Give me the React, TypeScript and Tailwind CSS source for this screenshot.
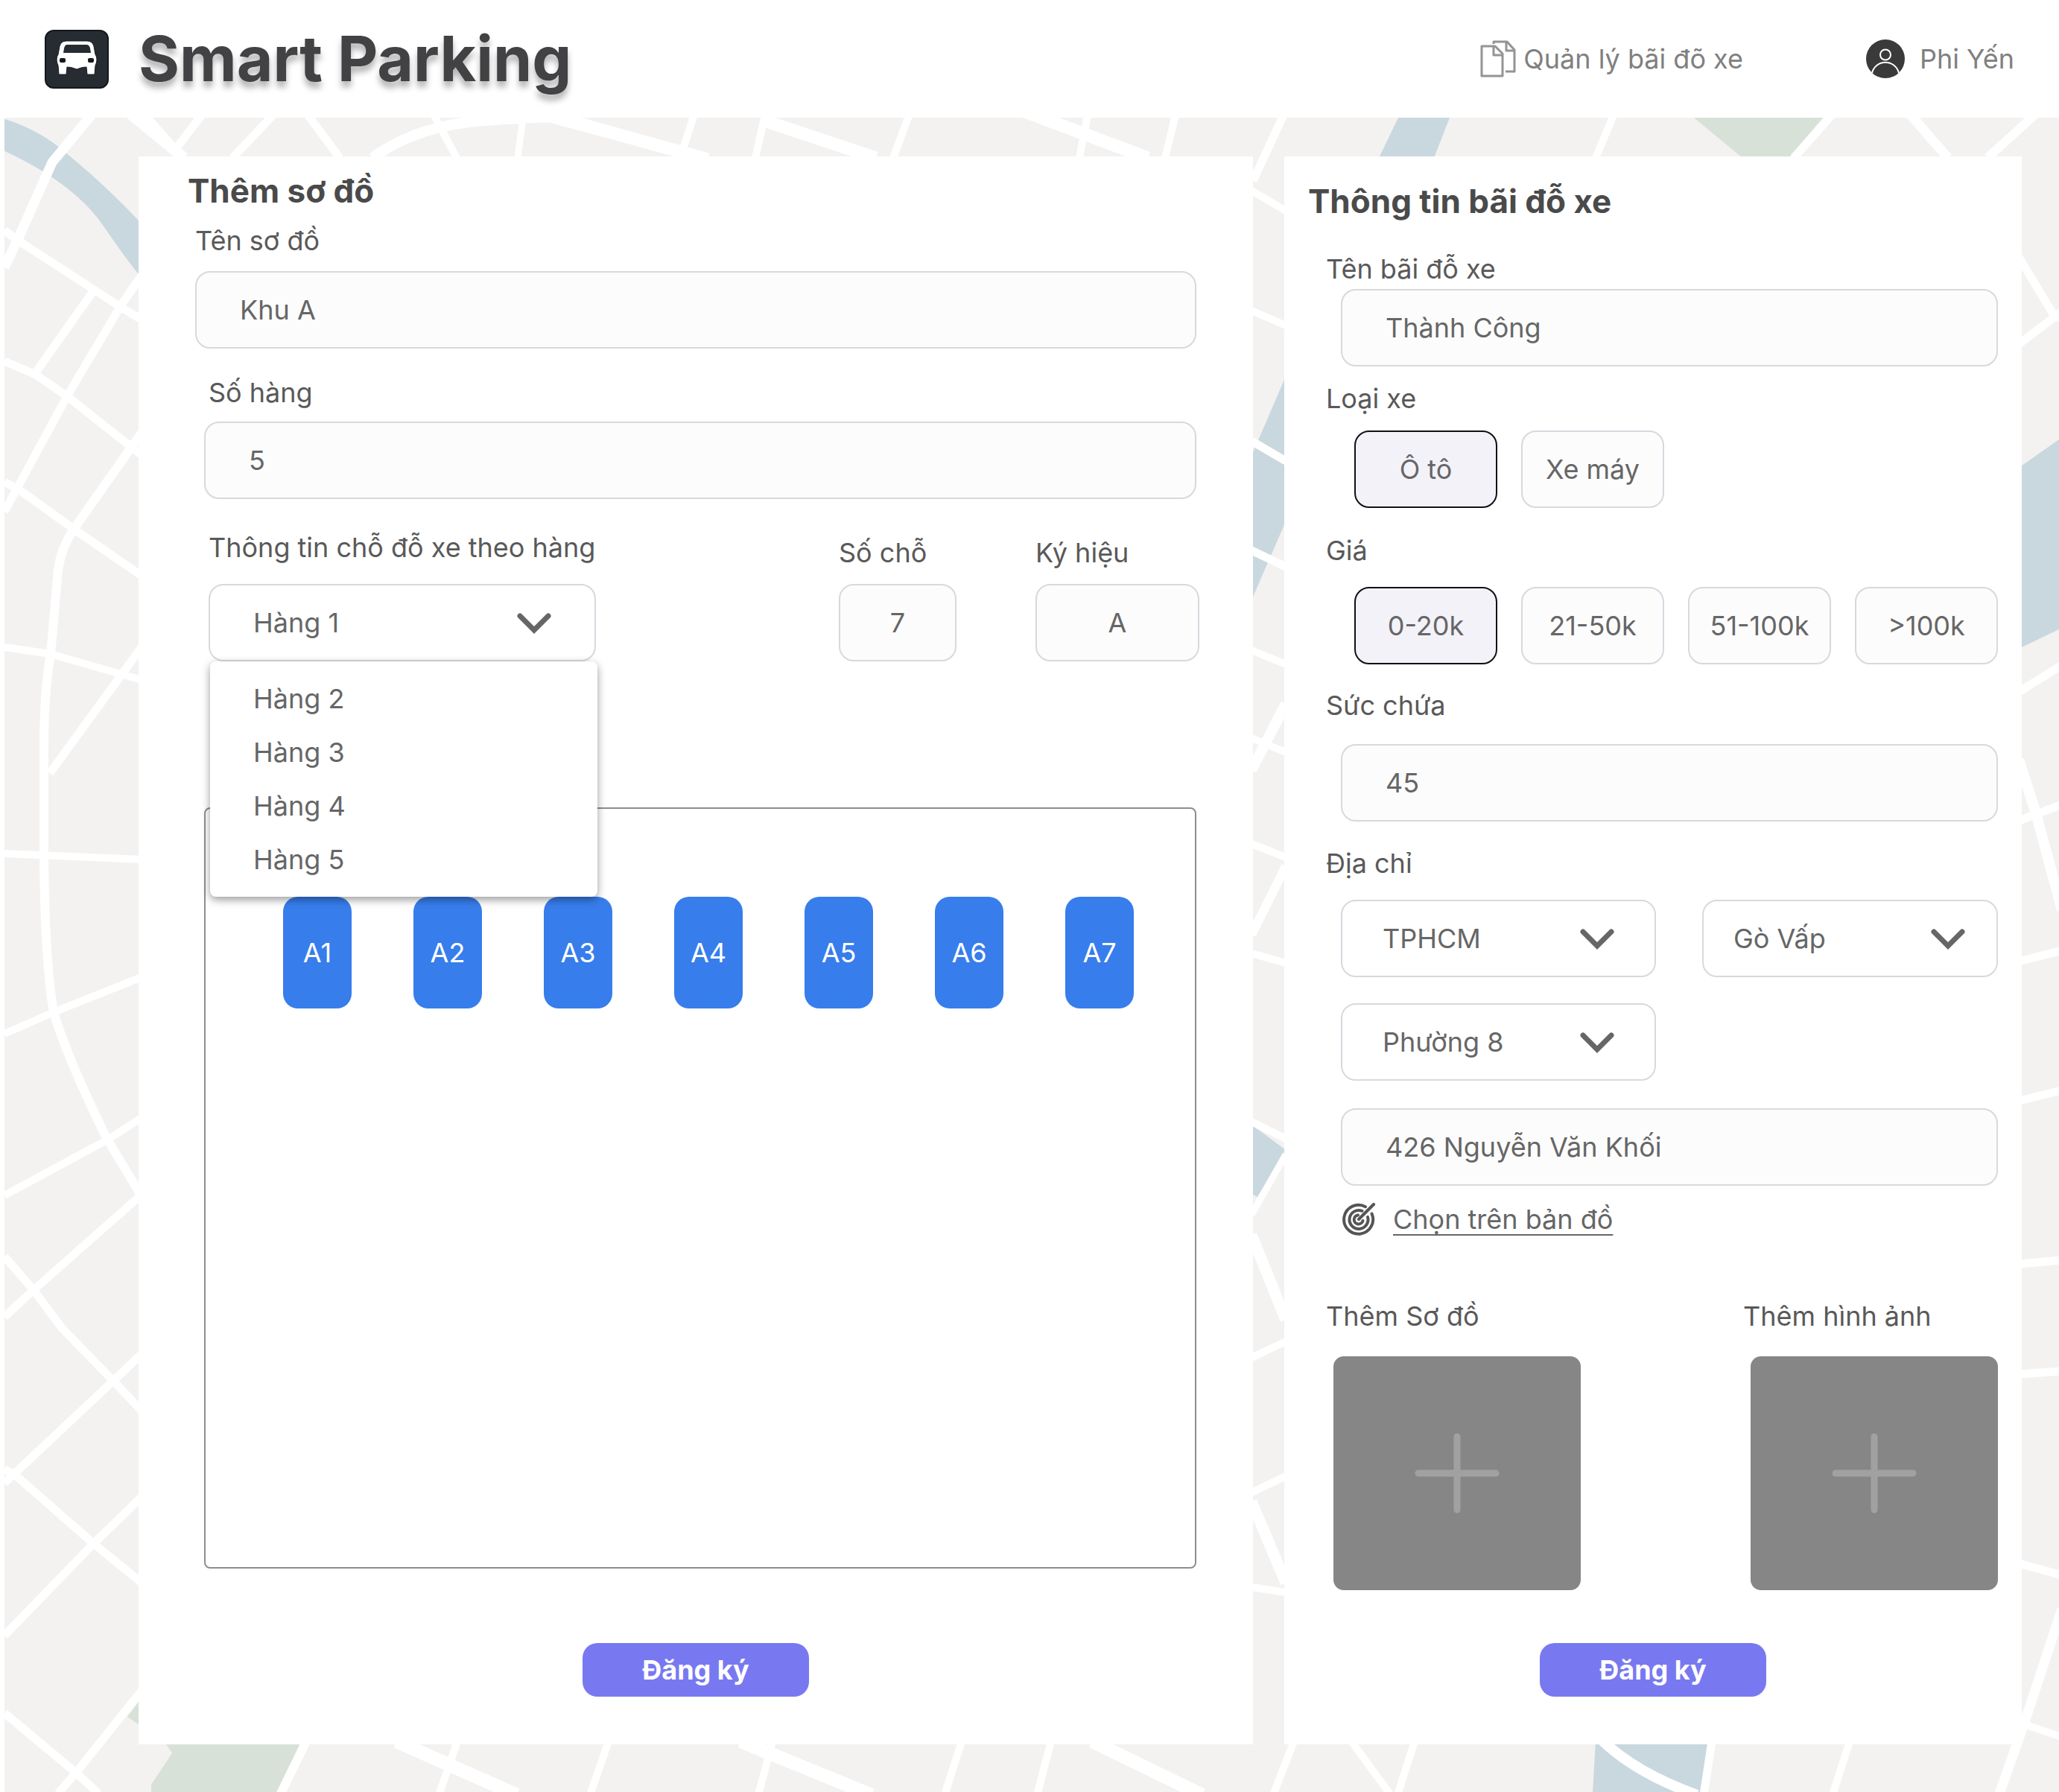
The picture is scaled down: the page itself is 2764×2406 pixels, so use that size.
import { useId, useState } from "react";
import type { ReactNode } from "react";

type Road = [path: string, width: number];

const roads: Road[] = [
  // left margin
  ["M6 359 L25 319 L70 218 L124 153", 13],
  ["M6 309 L23 322 L163 413 L190 429", 11],
  ["M48 500 L125 391", 11],
  ["M6 687 L90 532 L163 409 L190 370", 11],
  ["M6 485 L48 503 L90 532 L190 611", 11],
  ["M6 647 L25 657 L100 711 L190 773", 11],
  ["M190 581 L100 709 Q82 735 78 765 L68 878 Q59 930 59 1000 L59 1145 Q60 1290 72 1359 Q90 1420 143 1528 L190 1606", 12],
  ["M6 869 L68 878 L190 913", 10],
  ["M67 1038 L190 869", 11],
  ["M6 1146 L190 1154", 10],
  ["M6 1388 L72 1359 L190 1312", 10],
  ["M6 1605 L143 1531 L190 1501", 10],
  ["M6 1768 L45 1732 L190 1604", 11],
  ["M6 1687 L45 1732 L83 1783 L152 1854 L190 1894", 11],
  ["M6 1991 L152 1854 L190 1818", 11],
  ["M6 1973 L20 1980 L125 2072 L190 2125", 11],
  ["M6 2196 L125 2073 L190 2010", 11],
  ["M6 2300 L103 2381 L132 2408", 11],
  ["M190 2270 L103 2379 L78 2408", 11],
  // top margin
  ["M172 150 L247 212", 15],
  ["M192 150 L240 204", 9],
  ["M274 150 L239 196", 11],
  ["M371 150 L312 212", 11],
  ["M410 150 L456 212", 11],
  ["M500 212 Q560 168 650 162 T740 158 L950 214", 14],
  ["M580 150 L613 212", 10],
  ["M703 150 L695 212", 9],
  ["M720 150 L950 214", 17],
  ["M933 150 L913 212", 10],
  ["M1028 150 L1014 212", 10],
  ["M1026 162 L1176 212", 17],
  ["M1222 150 L1199 212", 10],
  ["M1376 150 L1541 212", 17],
  ["M1461 150 L1449 212", 10],
  ["M1579 150 L1564 212", 10],
  ["M1725 150 L1682 243", 11],
  ["M2168 150 L2142 212", 10],
  ["M2463 150 L2408 212", 11],
  ["M2561 150 L2615 212", 13],
  ["M2736 150 L2668 212", 12],
  // gap between the cards
  ["M1680 256 L1726 283", 10],
  ["M1680 417 L1726 437", 10],
  ["M1680 592 L1726 619", 11],
  ["M1680 739 L1726 761", 11],
  ["M1680 873 L1726 892", 10],
  ["M1680 1034 L1726 945", 14],
  ["M1680 991 L1726 1010", 10],
  ["M1680 1133 L1726 1151", 10],
  ["M1680 1255 L1726 1163", 12],
  ["M1680 1280 L1726 1293", 10],
  ["M1680 1506 L1726 1529", 10],
  ["M1680 1631 L1726 1550", 9],
  ["M1680 1658 L1726 1772", 15],
  ["M1680 1823 L1726 1801", 10],
  ["M1680 2004 L1726 1982", 10],
  ["M1680 2016 L1726 2125", 15],
  ["M1680 2131 L1726 2138", 10],
  // right margin
  ["M2710 345 L2757 423 L2768 428", 11],
  ["M2710 462 L2768 418", 11],
  ["M2710 929 L2768 893", 11],
  ["M2710 1020 L2733 1092 L2768 1222", 14],
  ["M2710 1102 L2768 1080", 11],
  ["M2710 1291 L2768 1276", 11],
  ["M2710 1478 L2768 1464", 11],
  ["M2710 1697 L2768 1692", 11],
  ["M2710 1845 L2768 1841", 11],
  ["M2710 2099 L2768 2115", 11],
  ["M2768 2160 L2717 2315 L2684 2408", 13],
  ["M2717 2315 L2768 2332", 10],
  // bottom margin
  ["M411 2338 L376 2410", 12],
  ["M532 2338 L694 2410", 18],
  ["M614 2338 L589 2410", 10],
  ["M817 2338 L792 2410", 10],
  ["M994 2338 L1170 2410", 18],
  ["M1037 2338 L1018 2410", 10],
  ["M1291 2338 L1268 2410", 10],
  ["M1411 2338 L1392 2410", 10],
  ["M1466 2338 L1614 2410", 18],
  ["M1737 2338 L1709 2410", 10],
  ["M1814 2338 L1867 2410", 10],
  ["M1899 2338 L1876 2410", 10],
  ["M2150 2336 Q2195 2380 2278 2410", 14],
  ["M2298 2338 L2287 2410", 11],
  ["M2483 2338 L2460 2410", 10],
];

const waters = [
  "M0 158 Q50 172 87 204 Q143 250 186 296 V368 Q167 345 140 305 Q100 245 0 200 Z",
  "M1877 158 H1946 L1925 212 H1851 Z",
  "M1680 612 L1726 505 V700 L1680 806 Z",
  "M1680 1510 L1726 1544 L1688 1607 L1680 1603 Z",
  "M2710 628 L2764 590 V845 L2710 871 Z",
  "M2142 2338 H2296 L2283 2406 H2138 Z",
];

const parks = [
  "M2274 158 H2447 L2401 212 H2339 Z",
  "M171 2305 L190 2280 V2338 H410 L376 2406 H203 V2396 L231 2354 L222 2340 Z",
];

function MapBackdrop() {
  return (
    <svg
      aria-hidden="true"
      viewBox="6 158 2758 2248"
      preserveAspectRatio="xMinYMin slice"
      className="absolute inset-y-0 right-0 left-1.5 h-full w-[calc(100%-6px)]"
    >
      <rect x="0" y="150" width="2770" height="2260" fill="#f3f2f0" />
      {waters.map((d) => (
        <path key={d} d={d} fill="#c9d8df" />
      ))}
      {parks.map((d) => (
        <path key={d} d={d} fill="#d8e1d8" />
      ))}
      {roads.map(([d, width]) => (
        <path key={d} d={d} fill="none" stroke="#ffffff" strokeWidth={width} strokeLinejoin="round" />
      ))}
    </svg>
  );
}

function LogoIcon() {
  return (
    <svg aria-hidden="true" viewBox="0 0 86 79" className="h-[79px] w-[86px] shrink-0">
      <rect x="1" y="1" width="84" height="77" rx="11" fill="#272c33" stroke="#14181d" strokeWidth="2" />
      <path
        d="M29 15 H57 Q64 15 66 22 L68 33 Q70 36 70 40 Q70 44 68 48 L67 60 H57 L56 50 Q50 50 46 52 Q43 54 40 52 Q36 50 30 50 L29 60 H19 L18 48 Q16 44 16 40 Q16 36 18 33 L20 22 Q22 15 29 15 Z"
        fill="#ffffff"
        stroke="#14181d"
        strokeWidth="1"
      />
      <path d="M30 20 H56 Q60 20 61 25 L62 31 H25 L26 25 Q27 20 30 20 Z" fill="#272c33" />
      <rect x="20" y="38" width="8" height="6" rx="2" fill="#14181d" />
      <rect x="58" y="38" width="8" height="6" rx="2" fill="#14181d" />
    </svg>
  );
}

function DocumentsIcon() {
  return (
    <svg aria-hidden="true" viewBox="0 0 48 50" className="h-[50px] w-12 shrink-0" fill="none" stroke="#949494" strokeWidth="3" strokeLinejoin="round">
      <path d="M2 8 H20 L30 18 V48 H2 Z" />
      <path d="M18 8 V20 H30" />
      <path d="M18 5 V2 H36 L46 13 V42 H34" />
      <path d="M35 2 V14 H46" />
    </svg>
  );
}

function UserIcon() {
  return (
    <svg aria-hidden="true" viewBox="0 0 52 52" className="size-[52px] shrink-0">
      <circle cx="26" cy="26" r="26" fill="#3a3a3a" />
      <circle cx="26" cy="20.500" r="7" fill="none" stroke="#ffffff" strokeWidth="2" />
      <path d="M8 45 A18.500 18.500 0 0 1 44 45" fill="none" stroke="#ffffff" strokeWidth="2" />
    </svg>
  );
}

function TargetIcon() {
  return (
    <svg aria-hidden="true" viewBox="0 0 44 44" className="size-11 shrink-0" fill="none" stroke="#555555" strokeWidth="4" strokeLinecap="round">
      <path d="M31 5.200 A19.500 19.500 0 1 0 39.500 14.500" />
      <path d="M26.500 10.800 A12.500 12.500 0 1 0 34 19" />
      <path d="M21 16.500 A6 6 0 1 0 27.500 24" />
      <path d="M22 22 L42 2" />
    </svg>
  );
}

function Chevron() {
  return (
    <svg aria-hidden="true" viewBox="0 0 46 28" className="h-7 w-[46px]" fill="none" stroke="#666666" strokeWidth="7" strokeLinecap="round">
      <path d="M4 4 L23 23 L42 4" strokeLinejoin="miter" />
    </svg>
  );
}

const fieldBox = "h-[104px] w-full rounded-[20px] border-2 border-[#d8d8df] text-[#666666]";

function Field({
  label,
  value,
  className,
  labelClass,
  inputClass,
}: {
  label: string;
  value: string;
  className: string;
  labelClass: string;
  inputClass: string;
}) {
  const id = useId();
  return (
    <div className={`flex flex-col ${className}`}>
      <label htmlFor={id} className={labelClass}>
        {label}
      </label>
      <input id={id} defaultValue={value} className={`${fieldBox} bg-[#fcfcfc] ${inputClass}`} />
    </div>
  );
}

function Select({
  id,
  label,
  options,
  padding,
  chevronClass,
}: {
  id?: string;
  label?: string;
  options: string[];
  padding: string;
  chevronClass: string;
}) {
  return (
    <div className="relative">
      <select id={id} aria-label={label} className={`${fieldBox} appearance-none bg-white ${padding}`}>
        {options.map((option) => (
          <option key={option}>{option}</option>
        ))}
      </select>
      <span className={`pointer-events-none absolute top-[39px] ${chevronClass}`}>
        <Chevron />
      </span>
    </div>
  );
}

function ChoiceGroup({ label, options, className, listClass }: { label: string; options: string[]; className: string; listClass: string }) {
  const id = useId();
  const [selected, setSelected] = useState(options[0]);
  return (
    <div role="group" aria-labelledby={id} className={className}>
      <p id={id}>{label}</p>
      <div className={`ml-[38px] grid grid-cols-4 gap-8 ${listClass}`}>
        {options.map((option) => (
          <button
            key={option}
            type="button"
            aria-pressed={option === selected}
            onClick={() => setSelected(option)}
            className={
              option === selected
                ? "h-[104px] rounded-[20px] border-2 border-[#111111] bg-[#f3f2f9] text-[#666666]"
                : "h-[104px] rounded-[20px] border-2 border-[#d8d8df] bg-[#fcfcfc] text-[#666666]"
            }
          >
            {option}
          </button>
        ))}
      </div>
    </div>
  );
}

function SubmitButton({ className }: { className: string }) {
  return (
    <button type="submit" className={`h-[72px] w-[304px] rounded-[20px] bg-[#7879f1] font-bold text-white ${className}`}>
      Đăng ký
    </button>
  );
}

function UploadTile({ label }: { label: string }) {
  const id = useId();
  return (
    <div>
      <p id={id}>{label}</p>
      <button
        type="button"
        aria-labelledby={id}
        className="mt-8 ml-2.5 flex h-[314px] w-[332px] items-center justify-center rounded-[14px] bg-[#868686]"
      >
        <svg aria-hidden="true" viewBox="0 0 114 108" className="h-[108px] w-[114px]" stroke="#a1a1a1" strokeWidth="9" strokeLinecap="round">
          <path d="M5 54 H109" />
          <path d="M57 5 V103" />
        </svg>
      </button>
    </div>
  );
}

function CardTitle({ children, className }: { children: ReactNode; className: string }) {
  return <h2 className={`text-[44px] leading-[52px] font-bold text-[#4a4a4a] ${className}`}>{children}</h2>;
}

function DiagramCard() {
  const slots = ["A1", "A2", "A3", "A4", "A5", "A6", "A7"];
  const rows = ["Hàng 2", "Hàng 3", "Hàng 4", "Hàng 5"];
  return (
    <form className="flex flex-col bg-white pt-5 pb-16" onSubmit={(event) => event.preventDefault()}>
      <CardTitle className="ml-[66px]">Thêm sơ đồ</CardTitle>
      <Field label="Tên sơ đồ" value="Khu A" className="mt-[19px] mr-[76px] ml-[76px]" labelClass="mb-[19px]" inputClass="px-[58px]" />
      <Field label="Số hàng" value="5" className="mt-[37px] mr-[76px] ml-[88px]" labelClass="mb-[17px] ml-1.5" inputClass="px-[58px]" />
      <div className="mt-[43px] mr-[72px] ml-[94px] flex items-end">
        <div className="relative w-[520px]">
          <label htmlFor="row" className="mb-[27px] block">
            Thông tin chỗ đỗ xe theo hàng
          </label>
          <Select id="row" options={["Hàng 1", ...rows]} padding="px-[58px]" chevronClass="right-[60px]" />
          <ul
            role="listbox"
            aria-label="Hàng"
            className="absolute top-full left-0.5 z-10 w-[520px] rounded-lg bg-white py-3.5 text-[#666666] shadow-[0_4px_12px_rgba(0,0,0,0.4)]"
          >
            {rows.map((row) => (
              <li key={row} role="option" aria-selected="false" className="px-[58px] leading-[72px]">
                {row}
              </li>
            ))}
          </ul>
        </div>
        <Field label="Số chỗ" value="7" className="ml-auto w-[158px]" labelClass="mb-5" inputClass="text-center" />
        <Field label="Ký hiệu" value="A" className="ml-[106px] w-[220px]" labelClass="mb-5" inputClass="text-center" />
      </div>
      <div className="mt-[196px] mr-[76px] ml-[88px] h-[1022px] rounded-lg border-2 border-[#8e8e8e] pt-[118px] pr-[82px] pl-[104px]">
        <ul className="flex justify-between">
          {slots.map((slot) => (
            <li key={slot} className="flex h-[150px] w-[92px] items-center justify-center rounded-[20px] bg-[#377dec] text-white">
              {slot}
            </li>
          ))}
        </ul>
      </div>
      <SubmitButton className="mx-auto mt-[100px]" />
    </form>
  );
}

function ParkingInfoCard() {
  return (
    <form className="flex flex-col bg-white px-8 pt-[34px] pb-16" onSubmit={(event) => event.preventDefault()}>
      <CardTitle className="">Thông tin bãi đỗ xe</CardTitle>
      <div className="flex flex-col pl-6">
        <Field label="Tên bãi đỗ xe" value="Thành Công" className="mt-[43px] ml-5" labelClass="-ml-5 mb-[5px]" inputClass="px-[58px]" />
        <ChoiceGroup label="Loại xe" options={["Ô tô", "Xe máy"]} className="mt-[21px]" listClass="mt-[21px]" />
        <ChoiceGroup label="Giá" options={["0-20k", "21-50k", "51-100k", ">100k"]} className="mt-[35px]" listClass="mt-[27px]" />
        <Field label="Sức chứa" value="45" className="mt-[33px] ml-5" labelClass="-ml-5 mb-[30px]" inputClass="px-[58px]" />
        <p className="mt-[34px]">Địa chỉ</p>
        <div className="mt-[27px] ml-5 grid grid-cols-[423fr_397fr] gap-x-[62px] gap-y-[35px]">
          <Select label="Tỉnh, thành phố" options={["TPHCM"]} padding="px-[54px]" chevronClass="right-14" />
          <Select label="Quận, huyện" options={["Gò Vấp"]} padding="px-10" chevronClass="right-11" />
          <Select label="Phường, xã" options={["Phường 8"]} padding="px-[54px]" chevronClass="right-14" />
        </div>
        <div className="mt-[37px] ml-5">
          <input aria-label="Số nhà, tên đường" defaultValue="426 Nguyễn Văn Khối" className={`${fieldBox} bg-[#fcfcfc] px-[58px]`} />
        </div>
        <a href="#map" className="mt-[23px] ml-[22px] flex items-center gap-6 self-start text-[#666666]">
          <TargetIcon />
          <span className="underline decoration-2 underline-offset-[7px]">Chọn trên bản đồ</span>
        </a>
        <div className="mt-[86px] flex justify-between">
          <UploadTile label="Thêm Sơ đồ" />
          <UploadTile label="Thêm hình ảnh" />
        </div>
      </div>
      <SubmitButton className="mx-auto mt-[71px]" />
    </form>
  );
}

export default function App() {
  return (
    <div className="flex min-h-screen flex-col bg-white font-['Inter',sans-serif] text-[36px] leading-[44px] text-[#595959]">
      <header className="flex h-[158px] items-center px-[60px]">
        <LogoIcon />
        <h1 className="ml-10 text-[84px] leading-[100px] font-bold text-[#424244] [text-shadow:0_8px_8px_rgba(0,0,0,0.3)]">
          Smart Parking
        </h1>
        <nav className="ml-auto flex items-center text-[#808080]">
          <a href="#lots" className="flex items-center gap-2.5">
            <DocumentsIcon />
            Quản lý bãi đõ xe
          </a>
          <a href="#profile" className="ml-[165px] flex items-center gap-5">
            <UserIcon />
            Phi Yến
          </a>
        </nav>
      </header>
      <main className="relative flex-1">
        <MapBackdrop />
        <div className="relative grid grid-cols-[1496fr_990fr] gap-[42px] pt-[52px] pr-[50px] pb-16 pl-[186px]">
          <DiagramCard />
          <ParkingInfoCard />
        </div>
      </main>
    </div>
  );
}
